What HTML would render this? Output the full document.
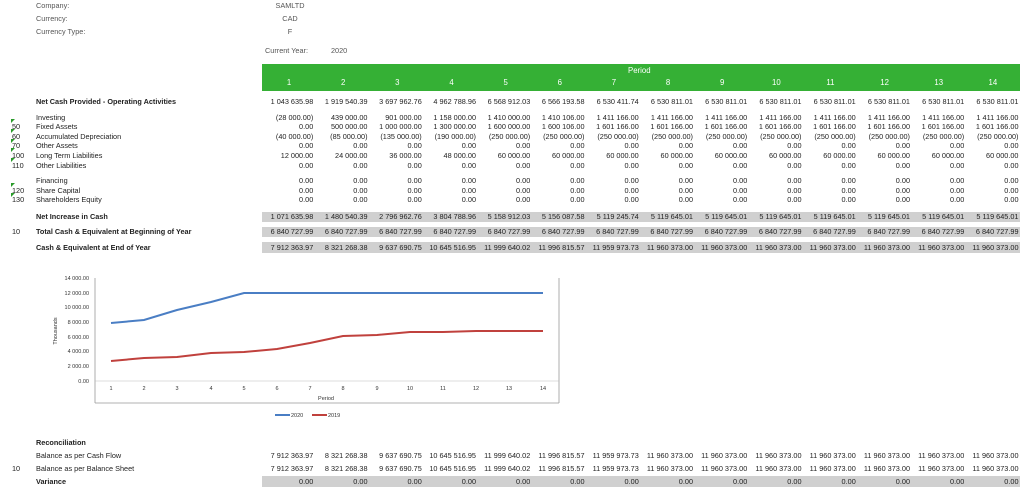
<!DOCTYPE html>
<html><head><meta charset="utf-8"><style>
*{margin:0;padding:0;box-sizing:border-box}
body{width:1024px;height:494px;background:#fff;position:relative;overflow:hidden;font-family:"Liberation Sans",Arial,sans-serif;font-size:7.3px;color:#222}
.a{position:absolute;white-space:nowrap;line-height:10px}
.g{color:#555}
.b{font-weight:bold}
.row{position:absolute;left:262px;width:760px;height:10px;line-height:10px;display:flex}
.row span{width:54.25px;text-align:right;padding-right:3px;white-space:nowrap}
.band{position:absolute;left:262px;width:758px;background:#d0d0d0}
.code{position:absolute;left:12px;line-height:10px}
.tri{position:absolute;left:11px;width:0;height:0;border-top:4px solid #2a9b2a;border-right:4px solid transparent}
.hd{position:absolute;left:262px;top:64px;width:758px;height:27px;background:#35b035;color:#fff}
.hd .n{position:absolute;top:14px;display:flex;width:758px}
.hd .n span{width:54.25px;text-align:center;font-size:7.8px}
</style></head><body>
<div class="a g" style="left:36px;top:1px">Company:</div>
<div class="a g" style="left:36px;top:14px">Currency:</div>
<div class="a g" style="left:36px;top:27px">Currency Type:</div>
<div class="a g" style="left:270px;top:1px;width:40px;text-align:center">SAMLTD</div>
<div class="a g" style="left:270px;top:14px;width:40px;text-align:center">CAD</div>
<div class="a g" style="left:270px;top:27px;width:40px;text-align:center">F</div>
<div class="a g" style="left:265px;top:46px">Current Year:</div>
<div class="a g" style="left:331px;top:46px">2020</div>

<div class="hd"><div class="a" style="left:366px;top:2px;font-size:7.8px">Period</div>
<div class="n"><span>1</span><span>2</span><span>3</span><span>4</span><span>5</span><span>6</span><span>7</span><span>8</span><span>9</span><span>10</span><span>11</span><span>12</span><span>13</span><span>14</span></div></div>

<div class="a b" style="left:36px;top:97px">Net Cash Provided - Operating Activities</div>
<div class="row" style="top:97px"><span>1 043 635.98</span><span>1 919 540.39</span><span>3 697 962.76</span><span>4 962 788.96</span><span>6 568 912.03</span><span>6 566 193.58</span><span>6 530 411.74</span><span>6 530 811.01</span><span>6 530 811.01</span><span>6 530 811.01</span><span>6 530 811.01</span><span>6 530 811.01</span><span>6 530 811.01</span><span>6 530 811.01</span></div>

<div class="a" style="left:36px;top:113px">Investing</div>
<div class="row" style="top:113px"><span>(28 000.00)</span><span>439 000.00</span><span>901 000.00</span><span>1 158 000.00</span><span>1 410 000.00</span><span>1 410 106.00</span><span>1 411 166.00</span><span>1 411 166.00</span><span>1 411 166.00</span><span>1 411 166.00</span><span>1 411 166.00</span><span>1 411 166.00</span><span>1 411 166.00</span><span>1 411 166.00</span></div>

<div class="tri" style="top:119px"></div><div class="code" style="top:122px">50</div>
<div class="a" style="left:36px;top:122px">Fixed Assets</div>
<div class="row" style="top:122px"><span>0.00</span><span>500 000.00</span><span>1 000 000.00</span><span>1 300 000.00</span><span>1 600 000.00</span><span>1 600 106.00</span><span>1 601 166.00</span><span>1 601 166.00</span><span>1 601 166.00</span><span>1 601 166.00</span><span>1 601 166.00</span><span>1 601 166.00</span><span>1 601 166.00</span><span>1 601 166.00</span></div>

<div class="tri" style="top:129px"></div><div class="code" style="top:132px">60</div>
<div class="a" style="left:36px;top:132px">Accumulated Depreciation</div>
<div class="row" style="top:132px"><span>(40 000.00)</span><span>(85 000.00)</span><span>(135 000.00)</span><span>(190 000.00)</span><span>(250 000.00)</span><span>(250 000.00)</span><span>(250 000.00)</span><span>(250 000.00)</span><span>(250 000.00)</span><span>(250 000.00)</span><span>(250 000.00)</span><span>(250 000.00)</span><span>(250 000.00)</span><span>(250 000.00)</span></div>

<div class="tri" style="top:139px"></div><div class="code" style="top:141px">70</div>
<div class="a" style="left:36px;top:141px">Other Assets</div>
<div class="row" style="top:141px"><span>0.00</span><span>0.00</span><span>0.00</span><span>0.00</span><span>0.00</span><span>0.00</span><span>0.00</span><span>0.00</span><span>0.00</span><span>0.00</span><span>0.00</span><span>0.00</span><span>0.00</span><span>0.00</span></div>

<div class="tri" style="top:148px"></div><div class="code" style="top:151px">100</div>
<div class="a" style="left:36px;top:151px">Long Term Liabilities</div>
<div class="row" style="top:151px"><span>12 000.00</span><span>24 000.00</span><span>36 000.00</span><span>48 000.00</span><span>60 000.00</span><span>60 000.00</span><span>60 000.00</span><span>60 000.00</span><span>60 000.00</span><span>60 000.00</span><span>60 000.00</span><span>60 000.00</span><span>60 000.00</span><span>60 000.00</span></div>

<div class="tri" style="top:158px"></div><div class="code" style="top:161px">110</div>
<div class="a" style="left:36px;top:161px">Other Liabilities</div>
<div class="row" style="top:161px"><span>0.00</span><span>0.00</span><span>0.00</span><span>0.00</span><span>0.00</span><span>0.00</span><span>0.00</span><span>0.00</span><span>0.00</span><span>0.00</span><span>0.00</span><span>0.00</span><span>0.00</span><span>0.00</span></div>

<div class="a" style="left:36px;top:176px">Financing</div>
<div class="row" style="top:176px"><span>0.00</span><span>0.00</span><span>0.00</span><span>0.00</span><span>0.00</span><span>0.00</span><span>0.00</span><span>0.00</span><span>0.00</span><span>0.00</span><span>0.00</span><span>0.00</span><span>0.00</span><span>0.00</span></div>

<div class="tri" style="top:183px"></div><div class="code" style="top:186px">120</div>
<div class="a" style="left:36px;top:186px">Share Capital</div>
<div class="row" style="top:186px"><span>0.00</span><span>0.00</span><span>0.00</span><span>0.00</span><span>0.00</span><span>0.00</span><span>0.00</span><span>0.00</span><span>0.00</span><span>0.00</span><span>0.00</span><span>0.00</span><span>0.00</span><span>0.00</span></div>

<div class="tri" style="top:193px"></div><div class="code" style="top:195px">130</div>
<div class="a" style="left:36px;top:195px">Shareholders Equity</div>
<div class="row" style="top:195px"><span>0.00</span><span>0.00</span><span>0.00</span><span>0.00</span><span>0.00</span><span>0.00</span><span>0.00</span><span>0.00</span><span>0.00</span><span>0.00</span><span>0.00</span><span>0.00</span><span>0.00</span><span>0.00</span></div>

<div class="band" style="top:212px;height:10px"></div>
<div class="a b" style="left:36px;top:212px">Net Increase in Cash</div>
<div class="row" style="top:212px"><span>1 071 635.98</span><span>1 480 540.39</span><span>2 796 962.76</span><span>3 804 788.96</span><span>5 158 912.03</span><span>5 156 087.58</span><span>5 119 245.74</span><span>5 119 645.01</span><span>5 119 645.01</span><span>5 119 645.01</span><span>5 119 645.01</span><span>5 119 645.01</span><span>5 119 645.01</span><span>5 119 645.01</span></div>

<div class="band" style="top:227px;height:10px"></div>
<div class="code" style="top:227px">10</div>
<div class="a b" style="left:36px;top:227px">Total Cash &amp; Equivalent at Beginning of Year</div>
<div class="row" style="top:227px"><span>6 840 727.99</span><span>6 840 727.99</span><span>6 840 727.99</span><span>6 840 727.99</span><span>6 840 727.99</span><span>6 840 727.99</span><span>6 840 727.99</span><span>6 840 727.99</span><span>6 840 727.99</span><span>6 840 727.99</span><span>6 840 727.99</span><span>6 840 727.99</span><span>6 840 727.99</span><span>6 840 727.99</span></div>

<div class="band" style="top:242px;height:11px"></div>
<div class="a b" style="left:36px;top:243px">Cash &amp; Equivalent at End of Year</div>
<div class="row" style="top:243px"><span>7 912 363.97</span><span>8 321 268.38</span><span>9 637 690.75</span><span>10 645 516.95</span><span>11 999 640.02</span><span>11 996 815.57</span><span>11 959 973.73</span><span>11 960 373.00</span><span>11 960 373.00</span><span>11 960 373.00</span><span>11 960 373.00</span><span>11 960 373.00</span><span>11 960 373.00</span><span>11 960 373.00</span></div>

<svg style="position:absolute;left:0;top:0" width="1024" height="494">
<g font-family="Liberation Sans,Arial,sans-serif" font-size="5.5" fill="#333">
<line x1="95" y1="278" x2="95" y2="403" stroke="#999" stroke-width="0.8"/>
<line x1="95" y1="403" x2="559" y2="403" stroke="#999" stroke-width="0.8"/>
<line x1="559" y1="278" x2="559" y2="403" stroke="#999" stroke-width="0.8"/>
<line x1="95" y1="381" x2="559" y2="381" stroke="#bbb" stroke-width="0.6"/>
<g text-anchor="end">
<text x="89" y="280">14 000.00</text><text x="89" y="295">12 000.00</text><text x="89" y="309">10 000.00</text><text x="89" y="324">8 000.00</text><text x="89" y="339">6 000.00</text><text x="89" y="353">4 000.00</text><text x="89" y="368">2 000.00</text><text x="89" y="383">0.00</text>
</g>
<g text-anchor="middle">
<text x="111" y="390">1</text><text x="144" y="390">2</text><text x="177" y="390">3</text><text x="211" y="390">4</text><text x="244" y="390">5</text><text x="277" y="390">6</text><text x="310" y="390">7</text><text x="343" y="390">8</text><text x="377" y="390">9</text><text x="410" y="390">10</text><text x="443" y="390">11</text><text x="476" y="390">12</text><text x="509" y="390">13</text><text x="543" y="390">14</text>
<text x="326" y="400">Period</text>
</g>
<text transform="translate(57,331) rotate(-90)" text-anchor="middle">Thousands</text>
<polyline fill="none" stroke="#4a7ec4" stroke-width="2" points="111,323 144,320 177,310 211,302 244,293 277,293 310,293 343,293 377,293 410,293 443,293 476,293 509,293 543,293"/>
<polyline fill="none" stroke="#c0413d" stroke-width="2" points="111,361 144,358 177,357 211,353 244,352 277,349 310,343 343,336 377,335 410,332 443,332 476,331 509,331 543,331"/>
<line x1="275" y1="415" x2="290" y2="415" stroke="#4a7ec4" stroke-width="2"/><text x="291" y="417">2020</text>
<line x1="312" y1="415" x2="327" y2="415" stroke="#c0413d" stroke-width="2"/><text x="328" y="417">2019</text>
</g></svg>

<div class="a b" style="left:36px;top:438px">Reconciliation</div>
<div class="a" style="left:36px;top:451px">Balance as per Cash Flow</div>
<div class="row" style="top:451px"><span>7 912 363.97</span><span>8 321 268.38</span><span>9 637 690.75</span><span>10 645 516.95</span><span>11 999 640.02</span><span>11 996 815.57</span><span>11 959 973.73</span><span>11 960 373.00</span><span>11 960 373.00</span><span>11 960 373.00</span><span>11 960 373.00</span><span>11 960 373.00</span><span>11 960 373.00</span><span>11 960 373.00</span></div>
<div class="code" style="top:464px">10</div>
<div class="a" style="left:36px;top:464px">Balance as per Balance Sheet</div>
<div class="row" style="top:464px"><span>7 912 363.97</span><span>8 321 268.38</span><span>9 637 690.75</span><span>10 645 516.95</span><span>11 999 640.02</span><span>11 996 815.57</span><span>11 959 973.73</span><span>11 960 373.00</span><span>11 960 373.00</span><span>11 960 373.00</span><span>11 960 373.00</span><span>11 960 373.00</span><span>11 960 373.00</span><span>11 960 373.00</span></div>
<div class="band" style="top:476px;height:11px"></div>
<div class="a b" style="left:36px;top:477px">Variance</div>
<div class="row" style="top:477px"><span>0.00</span><span>0.00</span><span>0.00</span><span>0.00</span><span>0.00</span><span>0.00</span><span>0.00</span><span>0.00</span><span>0.00</span><span>0.00</span><span>0.00</span><span>0.00</span><span>0.00</span><span>0.00</span></div>
</body></html>
